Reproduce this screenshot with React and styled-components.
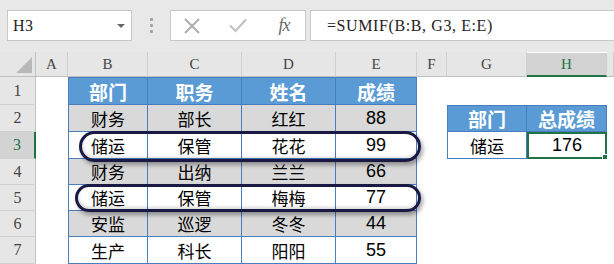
import React from 'react';
import styled, {createGlobalStyle, css} from 'styled-components';

const GlobalStyle = createGlobalStyle`
    body {
        margin: 0;
        background: #fff;
        font-family: "Liberation Sans", "Noto Sans CJK SC", sans-serif;
    }
`;

const TABLE_LINE = '#4a7dc0';
const GREEN = '#217346';
const SERIF = '"Liberation Serif", "DejaVu Serif", serif';

const Window = styled.div`
    width: 614px;
    height: 264px;
    overflow: hidden;
    background: #fff;
`;

// formula bar strip
const FormulaBar = styled.div`
    height: 52px;
    box-sizing: border-box;
    padding: 10px 0 0 7px;
    background: #e8e8e8;
    display: flex;
    align-items: flex-start;
`;

const NameBox = styled.div`
    width: 125px;
    height: 31px;
    box-sizing: border-box;
    background: #fff;
    border: 1px solid #c8c8c8;
    display: flex;
    align-items: center;
    justify-content: space-between;
    padding: 0 6px 0 5px;
    font-family: ${SERIF};
    font-size: 16px;
    letter-spacing: 0.5px;
    color: #222;
`;

const Caret = styled.span`
    width: 0;
    height: 0;
    border-left: 4px solid transparent;
    border-right: 4px solid transparent;
    border-top: 4px solid #666;
`;

const Grip = styled.div`
    width: 38px;
    height: 31px;
    display: flex;
    flex-direction: column;
    align-items: center;
    justify-content: center;
    gap: 3px;

    span {
        width: 3px;
        height: 3px;
        border-radius: 1px;
        background: #a2a2a2;
    }
`;

const ButtonBox = styled.div`
    width: 136px;
    height: 31px;
    box-sizing: border-box;
    background: #fff;
    border: 1px solid #c8c8c8;
    display: flex;
    align-items: center;
    gap: 16px;
    padding-left: 6px;
`;

const IconSlot = styled.div`
    width: 30px;
    height: 29px;
    display: flex;
    align-items: center;
    justify-content: center;
`;

const Fx = styled.span`
    font-family: ${SERIF};
    font-style: italic;
    font-size: 18px;
    color: #6a6a6a;
    letter-spacing: -1px;
`;

const FormulaInput = styled.div`
    flex: 1;
    margin-left: 4px;
    height: 31px;
    box-sizing: border-box;
    background: #fff;
    border: 1px solid #c8c8c8;
    border-right: none;
    display: flex;
    align-items: center;
    padding-left: 16px;
    font-family: ${SERIF};
    font-size: 16px;
    letter-spacing: 0.6px;
    color: #222;
    white-space: pre;
`;

// sheet grid
const Sheet = styled.div`
    position: relative;
    display: grid;
    grid-template-columns: 36px 32px 80px 94px 94px 81px 30px 80px 80px 1fr;
    grid-template-rows: 25px 28px 27px 27px 26px 26px 26px 27px;
`;

const Corner = styled.div`
    background: #e6e6e6;
    border-right: 1px solid #c0c0c0;
    border-bottom: 1px solid #c0c0c0;
    position: relative;

    &::after {
        content: '';
        position: absolute;
        right: 3px;
        bottom: 3px;
        border-left: 16px solid transparent;
        border-bottom: 16px solid #b8b8b8;
    }
`;

const ColHead = styled.div`
    box-sizing: border-box;
    background: ${p => p.$active ? '#d3d3d3' : '#e6e6e6'};
    border-right: 1px solid #d0d0d0;
    border-bottom: ${p => p.$active ? `2px solid ${GREEN}` : '1px solid #c0c0c0'};
    margin-top: ${p => p.$active ? '1px' : '0'};
    display: flex;
    align-items: center;
    justify-content: center;
    font-family: ${SERIF};
    font-size: 15px;
    color: ${p => p.$active ? GREEN : '#444'};
`;

const RowHead = styled.div`
    box-sizing: border-box;
    background: ${p => p.$active ? '#d3d3d3' : '#e6e6e6'};
    border-bottom: 1px solid #d2d2d2;
    border-right: ${p => p.$active ? `2px solid ${GREEN}` : '1px solid #c0c0c0'};
    display: flex;
    align-items: center;
    justify-content: center;
    font-family: ${SERIF};
    font-size: 16px;
    color: ${p => p.$active ? GREEN : '#444'};
`;

const fills = {head: '#5b9bd5', gray: '#d9d9d9', white: '#fff'};

const Cell = styled.div`
    position: relative;
    box-sizing: border-box;
    display: flex;
    align-items: center;
    justify-content: center;
    background: ${p => fills[p.$fill] || '#fff'};
    color: ${p => p.$fill === 'head' ? '#fff' : '#000'};
    font-weight: ${p => p.$fill === 'head' ? 700 : 400};
    font-size: ${p => p.$fill === 'head' ? '19px' : p.$num ? '18px' : '17px'};
    ${p => p.$fill && css`
        border-right: 1px solid ${TABLE_LINE};
        border-bottom: 1px solid ${TABLE_LINE};
    `}
    ${p => p.$left && css`border-left: 1px solid ${TABLE_LINE};`}
    ${p => p.$top && css`border-top: 1px solid ${TABLE_LINE};`}
    ${p => p.$active && css`
        border: 2px solid ${GREEN};
    `}
`;

const FillHandle = styled.span`
    position: absolute;
    right: -4px;
    bottom: -4px;
    width: 5px;
    height: 5px;
    background: ${GREEN};
    border: 1px solid #fff;
`;

const Loop = styled.div`
    position: absolute;
    left: ${p => p.$left}px;
    top: ${p => p.$top}px;
    width: ${p => p.$width}px;
    height: ${p => p.$height}px;
    box-sizing: border-box;
    border: 3px solid #191943;
    border-radius: 16px;
    box-shadow: 2px 3px 4px rgba(0, 0, 0, 0.35), inset 1px -2px 3px rgba(0, 0, 0, 0.15);
    pointer-events: none;
`;

const COLS = ['A', 'B', 'C', 'D', 'E', 'F', 'G', 'H'];

const records = [
    ['部门', '职务', '姓名', '成绩'],
    ['财务', '部长', '红红', '88'],
    ['储运', '保管', '花花', '99'],
    ['财务', '出纳', '兰兰', '66'],
    ['储运', '保管', '梅梅', '77'],
    ['安监', '巡逻', '冬冬', '44'],
    ['生产', '科长', '阳阳', '55'],
];

const summary = {
    2: [{text: '部门', fill: 'head'}, {text: '总成绩', fill: 'head'}],
    3: [{text: '储运', fill: 'white'}, {text: '176', fill: 'white', active: true}],
};

const mainFill = (r) => {
    if (r === 1) return 'head';
    return r % 2 === 0 ? 'gray' : 'white';
};

const isNum = (t) => /^\d+$/.test(t);

const CrossIcon = () => (
    <svg width="16" height="16" viewBox="0 0 16 16">
        <path d="M1 1 L15 15 M15 1 L1 15" stroke="#ababab" strokeWidth="1.8" fill="none"/>
    </svg>
);

const CheckIcon = () => (
    <svg width="18" height="15" viewBox="0 0 18 15">
        <path d="M1 7.5 L6.5 13 L17 1.5" stroke="#c2c2c2" strokeWidth="2.2" fill="none"/>
    </svg>
);

export default function App() {
    return (
        <Window>
            <GlobalStyle/>
            <FormulaBar>
                <NameBox>
                    <span>H3</span>
                    <Caret/>
                </NameBox>
                <Grip><span/><span/><span/></Grip>
                <ButtonBox>
                    <IconSlot><CrossIcon/></IconSlot>
                    <IconSlot><CheckIcon/></IconSlot>
                    <IconSlot><Fx>fx</Fx></IconSlot>
                </ButtonBox>
                <FormulaInput>=SUMIF(B:B, G3, E:E)</FormulaInput>
            </FormulaBar>

            <Sheet>
                <Corner/>
                {COLS.map(c => <ColHead key={c} $active={c === 'H'}>{c}</ColHead>)}
                <ColHead/>

                {records.map((row, i) => {
                    const r = i + 1;
                    const side = summary[r];
                    return (
                        <React.Fragment key={r}>
                            <RowHead $active={r === 3}>{r}</RowHead>
                            <Cell/>
                            {row.map((text, j) => (
                                <Cell
                                    key={j}
                                    $fill={mainFill(r)}
                                    $left={j === 0}
                                    $top={r === 1}
                                    $num={isNum(text)}
                                >
                                    {text}
                                </Cell>
                            ))}
                            <Cell/>
                            {side ? side.map((c, j) => (
                                <Cell
                                    key={'s' + j}
                                    $fill={c.fill}
                                    $left={j === 0}
                                    $top={r === 2}
                                    $num={isNum(c.text)}
                                    $active={c.active}
                                >
                                    {c.text}
                                    {c.active && <FillHandle/>}
                                </Cell>
                            )) : (
                                <>
                                    <Cell/>
                                    <Cell/>
                                </>
                            )}
                            <Cell/>
                        </React.Fragment>
                    );
                })}

                <Loop $left={79} $top={79} $width={342} $height={31}/>
                <Loop $left={75} $top={132} $width={346} $height={28}/>
            </Sheet>
        </Window>
    );
}
